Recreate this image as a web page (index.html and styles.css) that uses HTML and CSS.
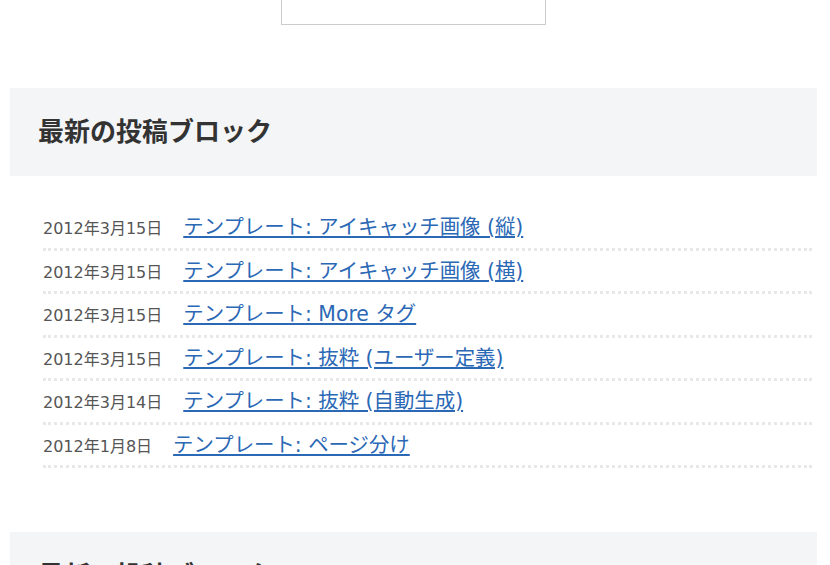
FILE: index.html
```html
<!DOCTYPE html>
<html lang="ja">
<head>
  <meta charset="UTF-8" />
  <meta name="viewport" content="width=device-width, initial-scale=1.0"/>
  <title>最新の投稿ブロック</title>
  <link rel="stylesheet" href="styles.css">
</head>
<body>
  <div class="page">
    <div class="top">
      <div class="search-box"></div>
    </div>

    <section class="block">
      <h2 class="block-title">最新の投稿ブロック</h2>
    </section>

    <ul class="posts">
      <li><span class="date">2012年3月15日</span><a href="#">テンプレート: アイキャッチ画像 (縦)</a></li>
      <li><span class="date">2012年3月15日</span><a href="#">テンプレート: アイキャッチ画像 (横)</a></li>
      <li><span class="date">2012年3月15日</span><a href="#">テンプレート: More タグ</a></li>
      <li><span class="date">2012年3月15日</span><a href="#">テンプレート: 抜粋 (ユーザー定義)</a></li>
      <li><span class="date">2012年3月14日</span><a href="#">テンプレート: 抜粋 (自動生成)</a></li>
      <li><span class="date">2012年1月8日</span><a href="#">テンプレート: ページ分け</a></li>
    </ul>

    <section class="block">
      <h2 class="block-title">最新の投稿ブロック</h2>
    </section>
  </div>
</body>
</html>
```

FILE: styles.css
```css
* {
  box-sizing: border-box;
  font-family: "DejaVu Sans", "Noto Sans CJK JP", sans-serif;
}

body {
  margin: 0;
  padding: 0;
  background: #fff;
  overflow: hidden;
}

.page {
  margin: 0 13px 0 10px;
}

.top {
  display: flex;
  justify-content: center;
  height: 25px;
}

.search-box {
  width: 265px;
  height: 25px;
  background: #fff;
  border: 1px solid #ccc;
  border-top: 0;
}

.block {
  background: #f4f5f7;
  height: 88px;
  margin-top: 63px;
  padding: 0 28px 4px;
  display: flex;
  align-items: center;
}

.block-title {
  margin: 0;
  font-family: "Noto Sans CJK JP", sans-serif;
  font-size: 26px;
  font-weight: bold;
  color: #333;
  line-height: 1;
}

.posts {
  list-style: none;
  margin: 31px 5px 64px 33px;
  padding: 0;
}

.posts li {
  padding: 5px 0 5.5px;
  font-size: 20px;
  line-height: 30px;
  border-bottom: 3px dotted #e8e8e8;
}

.date {
  display: inline-block;
  margin-right: 21px;
  font-size: 16px;
  line-height: 1;
  color: #555;
}

.posts a {
  font-size: 20.4px;
  color: #2b68b5;
  text-decoration: underline;
}
```
